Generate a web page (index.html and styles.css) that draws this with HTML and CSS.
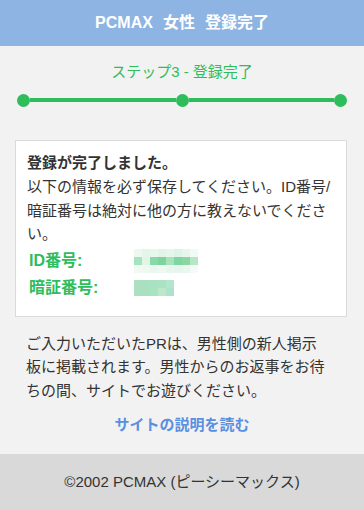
FILE: index.html
```html
<!DOCTYPE html>
<html lang="ja">
<head>
<meta charset="utf-8">
<title>PCMAX 女性 登録完了</title>
<link rel="stylesheet" href="styles.css">
</head>
<body>
<header class="header">
  <h1 class="header-title"><span>PCMAX</span><span>女性</span><span>登録完了</span></h1>
</header>
<main class="main">
  <section class="steps">
    <p class="steps-title">ステップ3 - 登録完了</p>
    <div class="steps-bar">
      <span class="dot"></span><span class="seg"></span><span class="dot"></span><span class="seg"></span><span class="dot"></span>
    </div>
  </section>
  <section class="card">
    <p class="card-lead">登録が完了しました。</p>
    <p class="card-text">以下の情報を必ず保存してください。ID番号/暗証番号は絶対に他の方に教えないでください。</p>
    <dl class="info">
      <div class="info-row">
        <dt class="info-label">ID番号:</dt>
        <dd class="info-value">
          <svg class="mosaic" width="64" height="24" viewBox="0 0 64 24">
            <rect x="0" y="0" width="8" height="8" fill="#eef8f1"/><rect x="8" y="0" width="8" height="8" fill="#e4f5ea"/><rect x="16" y="0" width="8" height="8" fill="#e8f7ec"/><rect x="24" y="0" width="8" height="8" fill="#e2f4e8"/><rect x="32" y="0" width="8" height="8" fill="#e6f6ec"/><rect x="40" y="0" width="8" height="8" fill="#def3e6"/><rect x="48" y="0" width="8" height="8" fill="#e6f6ea"/><rect x="56" y="0" width="8" height="8" fill="#f2faf4"/>
            <rect x="0" y="8" width="8" height="8" fill="#a6e3c0"/><rect x="8" y="8" width="8" height="8" fill="#e4f5e6"/><rect x="16" y="8" width="8" height="8" fill="#8ad9aa"/><rect x="24" y="8" width="8" height="8" fill="#7dd49c"/><rect x="32" y="8" width="8" height="8" fill="#a8e2bc"/><rect x="40" y="8" width="8" height="8" fill="#7dd6a4"/><rect x="48" y="8" width="8" height="8" fill="#8ad7a4"/><rect x="56" y="8" width="8" height="8" fill="#b6e6c6"/>
            <rect x="0" y="16" width="8" height="8" fill="#f0faf3"/><rect x="8" y="16" width="8" height="8" fill="#eef9f0"/><rect x="16" y="16" width="8" height="8" fill="#ebf8ef"/><rect x="24" y="16" width="8" height="8" fill="#eff9f1"/><rect x="32" y="16" width="8" height="8" fill="#e8f7ed"/><rect x="40" y="16" width="8" height="8" fill="#e6f6ec"/><rect x="48" y="16" width="8" height="8" fill="#eaf7ee"/><rect x="56" y="16" width="8" height="8" fill="#f4fbf6"/>
          </svg>
        </dd>
      </div>
      <div class="info-row">
        <dt class="info-label">暗証番号:</dt>
        <dd class="info-value">
          <svg class="mosaic" width="40" height="16" viewBox="0 0 40 16">
            <rect x="0" y="0" width="8" height="8" fill="#ade0c0"/><rect x="8" y="0" width="8" height="8" fill="#a8e0c0"/><rect x="16" y="0" width="8" height="8" fill="#a6e2c3"/><rect x="24" y="0" width="8" height="8" fill="#a9e3c3"/><rect x="32" y="0" width="8" height="8" fill="#b2e6ce"/>
            <rect x="0" y="8" width="8" height="8" fill="#ade0c0"/><rect x="8" y="8" width="8" height="8" fill="#a8e0c0"/><rect x="16" y="8" width="8" height="8" fill="#a8e3c3"/><rect x="24" y="8" width="8" height="8" fill="#bce8c7"/><rect x="32" y="8" width="8" height="8" fill="#ade3cd"/>
          </svg>
        </dd>
      </div>
    </dl>
  </section>
  <p class="note">ご入力いただいたPRは、男性側の新人掲示板に掲載されます。男性からのお返事をお待ちの間、サイトでお遊びください。</p>
  <p class="guide"><a class="guide-link" href="#">サイトの説明を読む</a></p>
</main>
<footer class="footer">©2002 PCMAX (ピーシーマックス)</footer>
</body>
</html>
```
FILE: styles.css
```css
* { box-sizing: border-box; }
html, body { margin: 0; padding: 0; }
body {
  width: 364px;
  min-height: 510px;
  background: #f2f2f2;
  color: #333;
  font-family: "Liberation Sans", "Noto Sans CJK JP", sans-serif;
  font-size: 15px;
  line-height: 24px;
}
p, h1, dl, dt, dd { margin: 0; }

.header {
  height: 46px;
  background: #8db4e3;
}
.header-title {
  display: flex;
  justify-content: center;
  gap: 10px;
  color: #fff;
  font-size: 16px;
  font-weight: bold;
  line-height: 46px;
}

.steps { padding-top: 16px; }
.steps-title {
  text-align: center;
  color: #2fbd5c;
  font-size: 15px;
  line-height: 20px;
}
.steps-bar {
  display: flex;
  align-items: center;
  margin: 11px 17px 0 17px;
  height: 14px;
}
.dot {
  width: 13px;
  height: 13px;
  border-radius: 50%;
  background: #2fbd5c;
  flex: none;
}
.seg {
  flex: 1;
  height: 4px;
  background: #2fbd5c;
}

.card {
  margin: 33px 17px 0 15px;
  background: #fff;
  border: 1px solid #dadada;
  padding: 9px 11px 14px 11px;
}
.card-lead { font-weight: bold; line-height: 25px; }
.card-text { line-height: 23.5px; }
.info { margin-top: 2px; }
.info-row {
  display: flex;
  align-items: center;
  height: 27px;
}
.info-label {
  width: 107px;
  padding-left: 2px;
  color: #2fbd5c;
  font-weight: bold;
  font-size: 16px;
}
.info-value { display: flex; align-items: center; }
.mosaic { display: block; }

.note {
  margin: 15px 37px 0 26px;
  line-height: 23.5px;
}
.guide {
  margin-top: 11px;
  text-align: center;
}
.guide-link {
  color: #5b8fe0;
  font-weight: bold;
  text-decoration: none;
}

.footer {
  margin-top: 17px;
  height: 56px;
  line-height: 56px;
  background: #d9d9d9;
  text-align: center;
  color: #333;
  font-size: 15px;
}
```
